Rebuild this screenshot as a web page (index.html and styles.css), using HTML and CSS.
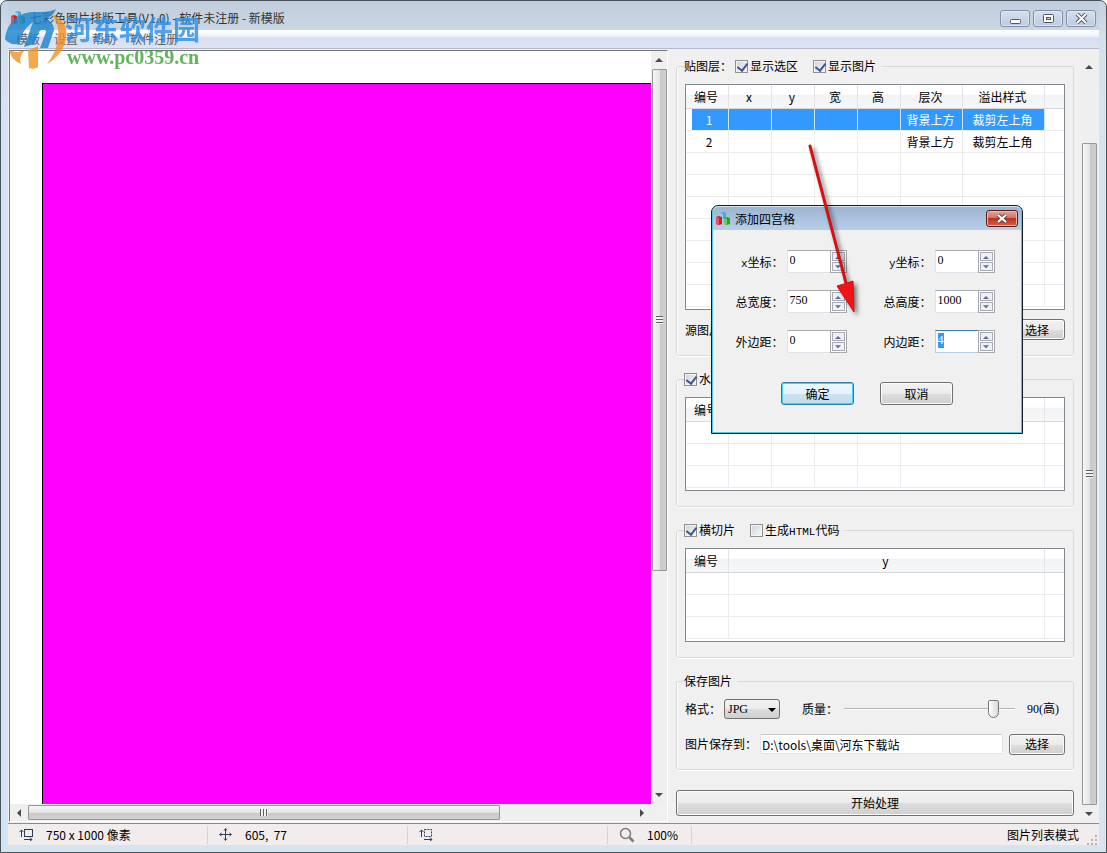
FILE: index.html
```html
<!DOCTYPE html>
<html lang="zh-CN">
<head>
<meta charset="utf-8">
<title>七彩色图片排版工具</title>
<link rel="stylesheet" href="styles.css">
</head>
<body>
<svg class="defs" width="0" height="0" aria-hidden="true">
  <symbol id="app" viewBox="0 0 16 16">
    <path d="M5 2l3-1 3 1v6H5z" fill="#4aa8d8"/><path d="M5 2l3 1v6H5z" fill="#8fd2f0"/>
    <path d="M1 6l3-1 3 1v7l-3 1-3-1z" fill="#c4232c"/><path d="M1 6l3 1v7l-3-1z" fill="#e4545a"/>
    <path d="M9 7l3-1 3 1v6l-3 1-3-1z" fill="#27a336"/><path d="M9 7l3 1v6l-3-1z" fill="#63cf5e"/>
  </symbol>
  <symbol id="up" viewBox="0 0 8 5"><path d="M0 5L4 1l4 4z"/></symbol>
  <symbol id="down" viewBox="0 0 8 5"><path d="M0 0h8L4 4z"/></symbol>
  <symbol id="left" viewBox="0 0 5 8"><path d="M5 0v8L1 4z"/></symbol>
  <symbol id="right" viewBox="0 0 5 8"><path d="M0 0v8l4-4z"/></symbol>
</svg>
<div class="window">
  <header class="titlebar">
    <svg class="app-icon" width="16" height="16"><use href="#app"/></svg>
    <h1 class="title">七彩色图片排版工具(V1.0) - 软件未注册 - 新模版</h1>
    <div class="window-buttons">
      <button class="winbtn" aria-label="最小化"><svg width="13" height="11"><rect x="1.500" y="6.500" width="10" height="4" rx="1" fill="#fff" stroke="#535666"/></svg></button>
      <button class="winbtn" aria-label="最大化"><svg width="13" height="11"><rect x="1.500" y="1.500" width="10" height="8" rx="1" fill="#fff" stroke="#535666"/><rect x="4.500" y="4.500" width="4" height="2" fill="#c5d3e4" stroke="#535666"/></svg></button>
      <button class="winbtn" aria-label="关闭"><svg width="13" height="11"><path d="M2 1l9 9M11 1l-9 9" stroke="#535666" stroke-width="4"/><path d="M2 1l9 9M11 1l-9 9" stroke="#fff" stroke-width="2"/></svg></button>
    </div>
  </header>
  <nav class="menubar">
    <button class="menu">模版</button><button class="menu">设置</button><button class="menu">帮助</button><button class="menu">软件注册</button>
  </nav>

  <main class="main">
    <section class="canvas-pane">
      <div class="canvas"><div class="page"></div></div>
      <div class="scroll vertical">
        <svg class="arrow" width="8" height="5"><use href="#up"/></svg>
        <div class="track"><div class="thumb thumb-canvas-v"><span class="grip"></span></div></div>
        <svg class="arrow" width="8" height="5"><use href="#down"/></svg>
      </div>
      <div class="scroll horizontal">
        <svg class="arrow" width="5" height="8"><use href="#left"/></svg>
        <div class="track"><div class="thumb thumb-canvas-h"><span class="grip"></span></div></div>
        <svg class="arrow" width="5" height="8"><use href="#right"/></svg>
      </div>
      <div class="corner"></div>
    </section>

    <section class="side">
      <div class="panels">
        <fieldset class="group">
          <legend class="legend"><span>贴图层：</span>
            <label class="check check-gap"><input type="checkbox" checked>显示选区</label>
            <label class="check"><input type="checkbox" checked>显示图片</label></legend>
          <div class="listbox">
            <table class="list">
              <colgroup><col class="c-id"><col class="c-num"><col class="c-num"><col class="c-num"><col class="c-num"><col class="c-layer"><col class="c-style"><col></colgroup>
              <thead><tr><th>编号</th><th>x</th><th>y</th><th>宽</th><th>高</th><th>层次</th><th>溢出样式</th><th></th></tr></thead>
              <tbody>
                <tr class="selected"><td>1</td><td></td><td></td><td></td><td></td><td>背景上方</td><td>裁剪左上角</td><td></td></tr>
                <tr><td>2</td><td></td><td></td><td></td><td></td><td>背景上方</td><td>裁剪左上角</td><td></td></tr>
                <tr><td></td><td></td><td></td><td></td><td></td><td></td><td></td><td></td></tr>
                <tr><td></td><td></td><td></td><td></td><td></td><td></td><td></td><td></td></tr>
                <tr><td></td><td></td><td></td><td></td><td></td><td></td><td></td><td></td></tr>
                <tr><td></td><td></td><td></td><td></td><td></td><td></td><td></td><td></td></tr>
                <tr><td></td><td></td><td></td><td></td><td></td><td></td><td></td><td></td></tr>
                <tr><td></td><td></td><td></td><td></td><td></td><td></td><td></td><td></td></tr>
                <tr><td></td><td></td><td></td><td></td><td></td><td></td><td></td><td></td></tr>
              </tbody>
            </table>
          </div>
          <div class="source-row"><span>源图片</span><button class="btn btn-pick">选择</button></div>
        </fieldset>

        <fieldset class="group">
          <legend class="legend"><label class="check"><input type="checkbox" checked>水印</label></legend>
          <div class="listbox">
            <table class="list">
              <colgroup><col class="c-id"><col class="c-num"><col class="c-num"><col class="c-num"><col class="c-num"><col class="c-wide"><col></colgroup>
              <thead><tr><th>编号</th><th></th><th></th><th></th><th></th><th></th><th></th></tr></thead>
              <tbody>
                <tr><td></td><td></td><td></td><td></td><td></td><td></td><td></td></tr>
                <tr><td></td><td></td><td></td><td></td><td></td><td></td><td></td></tr>
                <tr><td></td><td></td><td></td><td></td><td></td><td></td><td></td></tr>
              </tbody>
            </table>
          </div>
        </fieldset>

        <fieldset class="group">
          <legend class="legend"><label class="check check-gap"><input type="checkbox" checked>横切片</label>
            <label class="check"><input type="checkbox"><span>生成<span class="half">HTML</span>代码</span></label></legend>
          <div class="listbox">
            <table class="list">
              <colgroup><col class="c-id"><col><col class="c-end"></colgroup>
              <thead><tr><th>编号</th><th>y</th><th></th></tr></thead>
              <tbody>
                <tr><td></td><td></td><td></td></tr>
                <tr><td></td><td></td><td></td></tr>
                <tr><td></td><td></td><td></td></tr>
              </tbody>
            </table>
          </div>
        </fieldset>

        <fieldset class="group save">
          <legend class="legend">保存图片</legend>
          <div class="row">
            <label for="fmt">格式：</label>
            <span class="select-wrap"><select id="fmt" class="select"><option>JPG</option></select><svg class="select-arrow" width="8" height="5"><use href="#down"/></svg></span>
            <label for="quality" class="quality-label">质量：</label>
            <input id="quality" class="range" type="range" min="0" max="100" value="90">
            <output class="quality" for="quality">90(高)</output>
          </div>
          <div class="row">
            <label for="path" class="path-label">图片保存到：</label>
            <input id="path" class="path" type="text" value="D:\tools\桌面\河东下载站">
            <button class="btn btn-pick">选择</button>
          </div>
        </fieldset>
        <button class="btn btn-start">开始处理</button>
      </div>
      <div class="scroll vertical">
        <svg class="arrow" width="8" height="5"><use href="#up"/></svg>
        <div class="track track-side"><div class="thumb thumb-side"><span class="grip"></span></div></div>
        <svg class="arrow" width="8" height="5"><use href="#down"/></svg>
      </div>
    </section>
  </main>

  <footer class="status">
    <div class="cell cell-std"><svg width="14" height="13" fill="none" stroke="#2c3f5f"><path d="M2.500 9V2M.5 4l2-2 2 2" /><rect x="5.500" y="1.500" width="8" height="7"/><path d="M5 11.500h8M11 9.500l2 2-2 1.500"/></svg><span>750 x 1000 像素</span></div>
    <div class="cell cell-std"><svg width="13" height="13" fill="none" stroke="#2c3f5f"><path d="M6.500 1v11M1 6.500h11M5 2.500l1.500-2 1.500 2M5 10.500l1.500 2 1.500-2M2.500 5l-2 1.500 2 1.500M10.500 5l2 1.500-2 1.500"/></svg><span>605,&nbsp; 77</span></div>
    <div class="cell cell-std"><svg width="14" height="13" fill="none" stroke="#2c3f5f"><path d="M2.500 9V2M.5 4l2-2 2 2" /><rect x="5.500" y="1.500" width="7" height="7" stroke-dasharray="2 1"/><path d="M5 11.500h8M11 9.500l2 2-2 1.500"/></svg></div>
    <div class="cell cell-zoom"><svg width="16" height="16" fill="none" stroke="#7c7c7c"><circle cx="6.500" cy="6.500" r="5" stroke-width="1.500"/><path d="M10.500 10.500l4 4" stroke-width="2.500"/></svg><span>100%</span></div>
    <div class="cell cell-mode">图片列表模式</div>
    <svg class="sizegrip" width="10" height="10" fill="#b4b0b0"><path d="M8 0h2v2H8zM4 4h2v2H4zM8 4h2v2H8zM0 8h2v2H0zM4 8h2v2H4zM8 8h2v2H8z"/></svg>
  </footer>
</div>

<div class="watermark">
  <svg class="mark-logo" width="72" height="62" viewBox="0 0 72 62">
    <path d="M0 31C2 14 14 4 29 4c8 0 16 0 22-3-2 5-6 9-11 10 5 1 9 5 9 11l-6 18h-8l6-16c0-3-5-3-7 0l-5 12-10 3 9-25c-8 6-13 13-13 22C7 37 3 35 0 31z" fill="#1d86cf"/>
    <path d="M46 6c12 4 17 13 15 24-2 12-9 20-19 26 6-8 10-16 11-26 1-10-1-18-7-24z" fill="#f29424"/>
    <path d="M23 42c4-1 8-3 10-4v21c-3 2-6 2-9 1z" fill="#f29424"/>
    <path d="M4 42c6 3 12 2 16 0-4 4-6 9-4 14C11 54 6 50 4 42z" fill="#f29424"/>
  </svg>
  <div class="mark-text"><span class="mark-name">河东软件园</span><span class="mark-url">www.pc0359.cn</span></div>
</div>

<div class="dialog" role="dialog" aria-label="添加四宫格">
  <div class="dialog-title"><svg width="16" height="16"><use href="#app"/></svg><span>添加四宫格</span>
    <button class="close" aria-label="关闭"><svg width="13" height="11"><path d="M2 2l8 7M10 2l-8 7" stroke="#5b4a50" stroke-width="4"/><path d="M2 2l8 7M10 2l-8 7" stroke="#fff" stroke-width="2"/></svg></button></div>
  <form class="dialog-body">
    <div class="fields">
      <div class="field"><label for="x"><span class="half">x</span>坐标：</label><span class="spin"><input id="x" type="text" value="0"><span class="spin-buttons"><button type="button" aria-label="增加"><svg width="6" height="4"><use href="#up"/></svg></button><button type="button" aria-label="减少"><svg width="6" height="4"><use href="#down"/></svg></button></span></span></div>
      <div class="field"><label for="y"><span class="half">y</span>坐标：</label><span class="spin"><input id="y" type="text" value="0"><span class="spin-buttons"><button type="button" aria-label="增加"><svg width="6" height="4"><use href="#up"/></svg></button><button type="button" aria-label="减少"><svg width="6" height="4"><use href="#down"/></svg></button></span></span></div>
      <div class="field"><label for="w">总宽度：</label><span class="spin"><input id="w" type="text" value="750"><span class="spin-buttons"><button type="button" aria-label="增加"><svg width="6" height="4"><use href="#up"/></svg></button><button type="button" aria-label="减少"><svg width="6" height="4"><use href="#down"/></svg></button></span></span></div>
      <div class="field"><label for="h">总高度：</label><span class="spin"><input id="h" type="text" value="1000"><span class="spin-buttons"><button type="button" aria-label="增加"><svg width="6" height="4"><use href="#up"/></svg></button><button type="button" aria-label="减少"><svg width="6" height="4"><use href="#down"/></svg></button></span></span></div>
      <div class="field"><label for="outer">外边距：</label><span class="spin"><input id="outer" type="text" value="0"><span class="spin-buttons"><button type="button" aria-label="增加"><svg width="6" height="4"><use href="#up"/></svg></button><button type="button" aria-label="减少"><svg width="6" height="4"><use href="#down"/></svg></button></span></span></div>
      <div class="field"><label for="inner">内边距：</label><span class="spin active"><input id="inner" type="text" value="4"><span class="spin-buttons"><button type="button" aria-label="增加"><svg width="6" height="4"><use href="#up"/></svg></button><button type="button" aria-label="减少"><svg width="6" height="4"><use href="#down"/></svg></button></span></span></div>
    </div>
    <div class="actions"><button type="button" class="btn btn-dialog btn-default">确定</button><button type="button" class="btn btn-dialog">取消</button></div>
  </form>
</div>

<svg class="pointer" width="64" height="180" viewBox="0 0 64 180" aria-hidden="true">
  <path d="M10 6L46 143" stroke="#d31212" stroke-width="3" stroke-linecap="round"/>
  <path d="M37 146l7-2 9-3 1 31z" fill="#f01414" stroke="#d01010"/>
</svg>
<script src="app.js"></script>
</body>
</html>
```
FILE: app.js
```js
const inner = document.getElementById("inner");
inner.focus();
inner.select();
```
FILE: styles.css
```css
* { box-sizing: border-box; }
html, body { height: 100%; margin: 0; }
body { position: relative; background: #fff; color: #000; font: 12px/16px "Noto Sans CJK SC", sans-serif; overflow: hidden; }
button, input, select { font: inherit; color: inherit; margin: 0; padding: 0; }
svg { display: block; flex: none; }
.defs { position: absolute; }
.half { font: 11px/12px "Liberation Mono", monospace; }

.window { height: 100%; display: flex; flex-direction: column; border: 1px solid #4a525c; border-radius: 7px 7px 0 0; background: linear-gradient(#c3d0df, #d3e0ed 40px, #d6e4f2 120px); padding: 0 7px 7px; }
.titlebar { flex: none; height: 29px; display: flex; align-items: center; gap: 4px; background: linear-gradient(#c0cedd, #cad6e3); padding: 5px 3px 0 2px; }
.title { flex: 1; margin: 0; font-size: 12px; font-weight: normal; color: #333; }
.window-buttons { display: flex; gap: 3px; }
.winbtn { width: 30px; height: 17px; display: flex; align-items: center; justify-content: center; border: 1px solid #8190a8; border-radius: 3px; background: linear-gradient(#d5e0ed, #bccbde); box-shadow: inset 0 0 0 1px #dfe8f2; }
.menubar { flex: none; height: 19px; display: flex; align-items: center; gap: 14px; padding-left: 8px; background: linear-gradient(#fff, #eef2fa 6px, #d8def0 8px, #dde3f3); border-bottom: 1px solid #b6bccc; }
.menu { border: 0; background: none; color: #5c6068; }

.main { flex: 1; min-height: 0; display: flex; background: #f0f0f0; border-bottom: 1px solid #8c8c8c; }
.canvas-pane { flex: 1; min-width: 0; margin: 1px 0 1px 1px; display: grid; grid-template-columns: 1fr 16px; grid-template-rows: 1fr 17px; border: 1px solid #777; border-right-color: #fff; border-bottom-color: #fff; }
.canvas { background: #fff; padding: 32px 0 0 32px; display: flex; }
.page { flex: 1; background: #f0f; border: solid #000; border-width: 1px 0 0 1px; }
.corner { background: #f0f0f0; }

.scroll { display: flex; align-items: center; background: #f0efef; fill: #4a4a4a; }
.scroll.vertical { flex-direction: column; width: 16px; padding: 6px 0; gap: 7px; }
.scroll.horizontal { padding: 0 6px; gap: 7px; }
.track { flex: 1; display: flex; align-self: stretch; }
.vertical .track { flex-direction: column; }
.thumb { border: 1px solid #979797; border-radius: 1px; display: flex; align-items: center; justify-content: center; }
.vertical .thumb { background: linear-gradient(90deg, #f5f5f5, #e4e4e4 50%, #c9c9c9 51%, #d0d0d0); width: 15px; }
.horizontal .thumb { background: linear-gradient(#f5f5f5, #e4e4e4 50%, #c9c9c9 51%, #d0d0d0); height: 15px; margin-top: 1px; }
.vertical .thumb { margin-left: 1px; }
.thumb-canvas-v { height: 70%; }
.thumb-canvas-h { width: 78%; }
.track-side { padding-top: 67px; }
.thumb-side { flex: 1; }
.vertical .grip { width: 7px; height: 8px; background: repeating-linear-gradient(#606060 0 1px, #f4f4f4 1px 3px); }
.horizontal .grip { width: 8px; height: 7px; background: repeating-linear-gradient(90deg, #606060 0 1px, #f4f4f4 1px 3px); }

.side { flex: 0 0 431px; display: flex; gap: 7px; padding: 9px 2px 0 8px; }
.panels { flex: 1; min-width: 0; display: flex; flex-direction: column; gap: 15px; }
.group { margin: 0; min-width: 0; padding: 10px 8px 15px; border: 1px solid #d9d9d9; border-radius: 3px; box-shadow: inset 1px 0 #fff, 0 1px #fff; }
.legend { display: flex; align-items: center; height: 16px; padding: 0 5px 0 0; margin-left: -1px; }
.legend > span { margin-right: 3px; }
.check { display: flex; align-items: center; gap: 2px; }
.check-gap { margin-right: 15px; }
input[type=checkbox] { appearance: none; width: 13px; height: 13px; border: 1px solid #8e8f8f; background: linear-gradient(135deg, #cdd2da, #f7f7f7); box-shadow: inset 0 0 0 1px #f4f4f4; position: relative; }
input[type=checkbox]:checked::after { content: ""; position: absolute; left: 3px; top: 0; width: 5px; height: 8px; border: solid #3e548e; border-width: 0 2px 2px 0; transform: rotate(38deg); }

.listbox { border: 1px solid #828790; background: #fff; padding-bottom: 2px; }
.list { width: 100%; table-layout: fixed; border-collapse: separate; border-spacing: 0; text-align: center; }
.c-id { width: 43px; } .c-num { width: 43px; } .c-layer { width: 62px; } .c-style { width: 82px; } .c-wide { width: 144px; } .c-end { width: 19px; }
.list th { height: 24px; padding: 0 2px 0 0; font-weight: normal; background: linear-gradient(#fff 40%, #f2f3f5 45%, #f6f7f8); border-right: 1px solid #e2e3e6; border-bottom: 1px solid #d5d8dc; }
.list td { height: 22px; padding: 0 2px 0 0; border-right: 1px solid #ececec; border-bottom: 1px solid #ececec; }
.list th:last-child, .list td:last-child { border-right: 0; }
.selected td { background: #3399ff; color: #fff; border-right-color: #cfe5fb; }
.selected td:first-child { background: linear-gradient(90deg, #fff 6px, #3399ff 6px); }
.selected td:last-child { background: #fff; }
.list td:first-child { padding: 0 0 0 4px; }
.source-row { display: flex; justify-content: space-between; align-items: center; margin-top: 9px; }

.btn { border: 1px solid #707070; border-radius: 3px; background: linear-gradient(#f2f2f2, #ebebeb 50%, #dddddd 51%, #cfcfcf); box-shadow: inset 0 0 0 1px #fbfbfb; text-align: center; line-height: 16px; }
.btn-pick { width: 56px; height: 21px; }
.btn-start { height: 26px; margin-top: 5px; flex: none; }

.save { display: flex; flex-direction: column; }
.row { display: flex; align-items: center; height: 20px; }
.row + .row { margin-top: 15px; }
.select-wrap { position: relative; width: 56px; height: 20px; margin-left: 3px; }
.select { appearance: none; width: 100%; height: 20px; padding-left: 3px; border: 1px solid #707070; border-radius: 3px; background: linear-gradient(#f2f2f2, #ebebeb 50%, #dddddd 51%, #cfcfcf); font: 12px/16px "Liberation Serif", serif; }
.select-arrow { position: absolute; right: 4px; top: 9px; pointer-events: none; }
.quality-label { margin-left: 22px; }
.range { appearance: none; flex: 1; min-width: 0; height: 20px; margin-left: 6px; background: linear-gradient(transparent 9px, #b4b4b4 9px 10px, #fff 10px 11px, transparent 11px); }
.range::-webkit-slider-thumb { appearance: none; width: 11px; height: 18px; border: 1px solid #777; border-radius: 2px 2px 6px 6px; background: linear-gradient(90deg, #fff, #d8d8d8); }
.quality { margin: 0 6px 0 12px; white-space: nowrap; font-family: "Liberation Serif", "Noto Sans CJK SC", serif; }
.path-label { width: 75px; white-space: nowrap; }
.path { flex: 1; min-width: 0; height: 20px; padding: 0 1px; border: 1px solid #e3e3e8; border-top-color: #c6c8cc; border-radius: 2px; background: #fff; margin-right: 6px; line-height: 16px; }

.status { flex: none; height: 21px; display: flex; align-items: center; background: #f1eded; padding-right: 2px; }
.cell { height: 18px; display: flex; align-items: center; gap: 13px; padding-left: 11px; border-right: 1px solid #d7d3d3; }
.cell-std { flex: 0 0 200px; }
.cell-zoom { flex: 0 0 84px; gap: 12px; }
.cell-mode { flex: 1; justify-content: flex-end; border: 0; padding-right: 8px; }
.sizegrip { align-self: flex-end; }

.watermark { position: absolute; left: 5px; top: 8px; display: flex; opacity: .82; pointer-events: none; }
.mark-logo { width: 72px; height: 62px; overflow: visible; }
.mark-text { display: flex; flex-direction: column; margin: 6px 0 0 -12px; }
.mark-name { font: bold 27px/30px "Noto Sans CJK SC", sans-serif; color: #2f8fe6; }
.mark-url { font: bold 20px/26px "Liberation Serif", serif; color: #3fa535; padding-left: 2px; }

.dialog { position: absolute; left: 711px; top: 205px; width: 312px; border: 1px solid #10202a; border-radius: 7px 7px 0 0; background: #f0f0f0; box-shadow: inset 0 0 0 1px #50c4e0; padding: 0 3px 3px; }
.dialog-title { display: flex; align-items: center; gap: 4px; height: 24px; margin: 0 -2px; padding: 0 2px; border-radius: 6px 6px 0 0; background: linear-gradient(#9db4d2, #b9cfe8); border-top: 1px solid #d5e3f2; }
.dialog-title span { flex: 1; }
.close { width: 32px; height: 17px; margin-right: 1px; display: flex; align-items: center; justify-content: center; border: 1px solid #5a1d1d; border-radius: 3px; background: linear-gradient(#e3a79c, #d2705f 48%, #bb3320 50%, #cf6147); box-shadow: inset 0 0 0 1px #eab9ae; }
.dialog-body { padding: 20px 0 25px; display: flex; flex-direction: column; align-items: center; gap: 29px; }
.fields { display: grid; grid-template-columns: auto auto; column-gap: 37px; row-gap: 17px; padding-right: 4px; }
.field { display: flex; align-items: center; gap: 3px; }
.field label { width: 48px; text-align: right; white-space: nowrap; }
.spin { width: 60px; height: 23px; display: flex; border: 1px solid #e2e3ea; border-top-color: #abadb3; background: #fff; }
.spin input { flex: 1; min-width: 0; width: 0; height: 18px; border: 0; outline: 0; padding: 0 0 0 2px; background: none; font: 12px/14px "Liberation Serif", serif; }
.spin input::selection { background: #3399ff; color: #fff; }
.spin.active { border-color: #b5cfe7; border-top-color: #3d7bad; }
.spin-buttons { width: 17px; display: flex; flex-direction: column; gap: 1px; padding: 1px; margin: -1px; background: #fff; border: 1px solid #a6a8ad; }
.spin-buttons button { flex: 1; min-height: 0; display: flex; align-items: center; justify-content: center; border: 1px solid #a9abb5; background: #eff0f5; fill: #5b6a96; }
.actions { display: flex; gap: 26px; }
.btn-dialog { width: 73px; height: 23px; }
.btn-default { border-color: #2c7fa4; background: linear-gradient(#eef6fb, #e2f1fa 50%, #cde4f2 51%, #bcdcee); box-shadow: inset 0 0 0 1px #45d0f5; }

.pointer { position: absolute; left: 800px; top: 140px; filter: drop-shadow(3px 3px 2px rgba(0, 0, 0, .5)); pointer-events: none; }
```
